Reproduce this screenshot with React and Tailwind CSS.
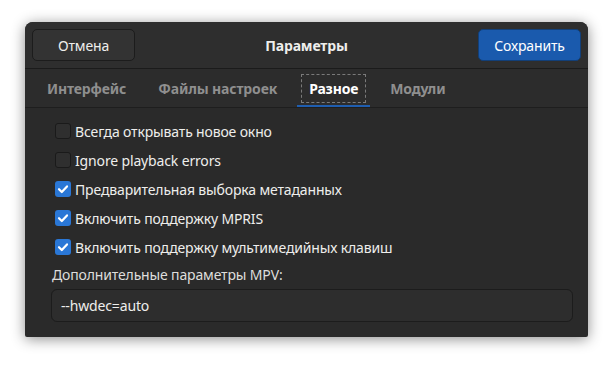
import React from 'react';

const options = [
  { label: 'Всегда открывать новое окно', checked: false },
  { label: 'Ignore playback errors', checked: false },
  { label: 'Предварительная выборка метаданных', checked: true },
  { label: 'Включить поддержку MPRIS', checked: true },
  { label: 'Включить поддержку мультимедийных клавиш', checked: true },
];

const tabs = ['Интерфейс', 'Файлы настроек', 'Разное', 'Модули'];

const Check = ({ checked }) =>
  checked ? (
    <span className="flex h-[16px] w-[16px] items-center justify-center rounded-[3px] bg-[#2a77d6]">
      <svg width="12" height="12" viewBox="0 0 12 12">
        <path d="M2 6.2 L4.8 9 L10 3.4" fill="none" stroke="#ffffff" strokeWidth="2.2" strokeLinecap="round" strokeLinejoin="round" />
      </svg>
    </span>
  ) : (
    <span className="h-[16px] w-[16px] rounded-[3px] border border-[#1a1a1a] bg-[#2f2f2f]" />
  );

const App = () => {
  return (
    <div
      className="h-[366px] w-[613px] bg-white pl-[25px] pt-[22px] text-[14px] tracking-[-0.15px] text-[#eeeeec]"
      style={{ fontFamily: '"Noto Sans", "DejaVu Sans", sans-serif' }}
    >
      <div className="flex h-[315px] w-[563px] flex-col overflow-hidden rounded-t-[8px] rounded-b-[2px] bg-[#2a2a2a] shadow-[0_2px_14px_rgba(0,0,0,0.45)]">
        {/* header */}
        <div className="grid h-[47px] grid-cols-[auto_1fr_auto] items-center border-b border-[#1b1b1b] bg-[#2e2e2e] px-[7px]">
          <button className="h-[32px] w-[103px] rounded-[5px] border border-[#1c1c1c] bg-[#333333] text-[#eeeeec]">
            Отмена
          </button>
          <div className="text-center font-bold">Параметры</div>
          <button className="h-[32px] w-[103px] rounded-[5px] border border-[#123f78] bg-[#1a5aad] text-white">
            Сохранить
          </button>
        </div>

        {/* tabs */}
        <div className="flex h-[39px] border-b border-[#1e1e1e] bg-[#2c2c2c] pl-[6px]">
          {tabs.map((t) => {
            const active = t === 'Разное';
            return (
              <div
                key={t}
                className={
                  active
                    ? 'relative flex items-center px-[16px] font-bold text-white'
                    : 'relative flex items-center px-[16px] font-bold text-[#8f8f8f]'
                }
              >
                {t}
                {active && (
                  <>
                    <span className="absolute inset-x-[8px] top-[5px] bottom-[4px] border border-dashed border-[#7a7a7a]" />
                    <span className="absolute inset-x-[4px] bottom-0 h-[2px] bg-[#1f5eb0]" />
                  </>
                )}
              </div>
            );
          })}
        </div>

        {/* content */}
        <div className="flex flex-col pl-[26px] pr-[15px] pt-[15px]">
          <div className="flex flex-col gap-[13px] pl-[4px]">
            {options.map((o) => (
              <label key={o.label} className="flex h-[16px] items-center gap-[4px]">
                <Check checked={o.checked} />
                <span>{o.label}</span>
              </label>
            ))}
          </div>
          <div className="mt-[9px] pl-[1px] text-[#dededc]">Дополнительные параметры MPV:</div>
          <div className="mt-[4px] flex h-[33px] items-center rounded-[6px] border border-[#1c1c1c] bg-[#2d2d2d] px-[9px]">
            --hwdec=auto
          </div>
        </div>
      </div>
    </div>
  );
};

export default App;
